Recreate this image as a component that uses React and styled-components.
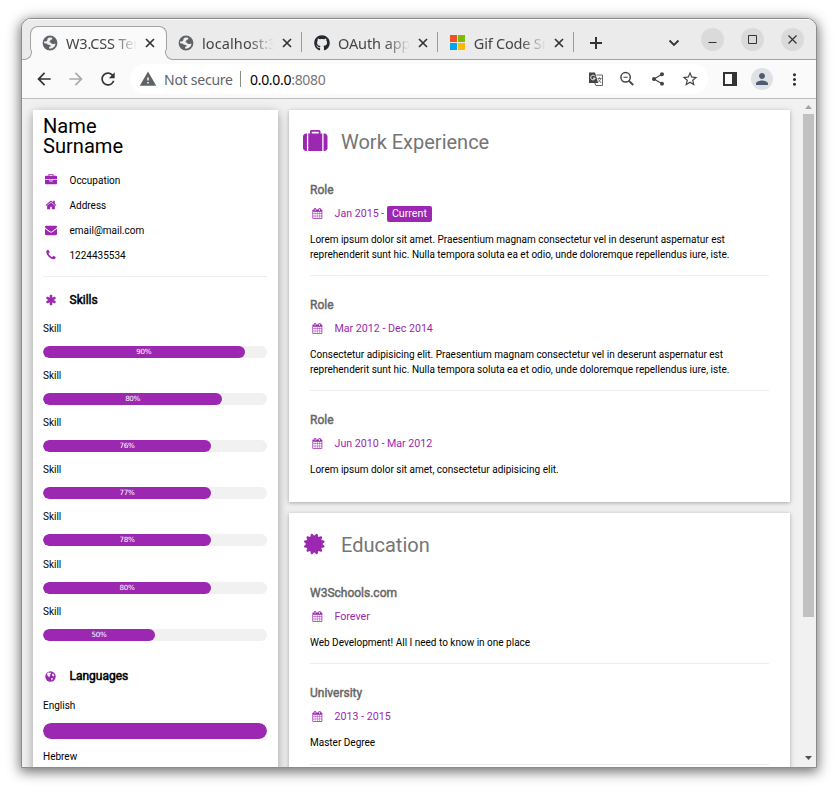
import React from "react";
import styled, { createGlobalStyle, css } from "styled-components";
import {
  MdArrowBack, MdArrowForward, MdRefresh, MdWarning,
  MdShare, MdStarBorder, MdPerson, MdMoreVert,
} from "react-icons/md";
import { FaGithub } from "react-icons/fa";

const PURPLE = "#9c27b0";

const GlobalStyle = createGlobalStyle`
  * { box-sizing: border-box; }
  body { margin: 0; background: #fff; overflow: hidden; }
  h1, h2, h3, h4, p { margin: 0; font-weight: 400; }
  svg { display: block; flex: none; }
`;

/* ---------- Window and tab strip ---------- */

const Desktop = styled.div`
  width: 838px;
  height: 792px;
  padding: 18px 21px;
  overflow: hidden;
`;

const BrowserWindow = styled.div`
  width: 796px;
  height: 750px;
  display: flex;
  flex-direction: column;
  border: 1px solid #8c8c8c;
  border-radius: 10px 10px 0 0;
  overflow: hidden;
  background: #fafafa;
  box-shadow: 0 3px 12px 1px rgba(0, 0, 0, 0.5), 0 2px 20px rgba(0, 0, 0, 0.1);
  font-family: "Noto Sans", "Open Sans", sans-serif;
`;

const TabStrip = styled.div`
  height: 41px;
  flex: none;
  display: flex;
  align-items: flex-end;
  padding-left: 8px;
  background: #ebebeb;
  border-bottom: 1px solid #a3a3a3;
  box-shadow: inset 0 1px #fafafa;
`;

const Tab = styled.div`
  position: relative;
  width: 136px;
  height: 33px;
  flex: none;
  display: flex;
  align-items: center;
  padding: 0 9px 0 12px;
  ${(p) => p.$separated && css`
    background: linear-gradient(#999, #999) right 0 top 6px / 1px 20px no-repeat;
  `}
  ${(p) => p.$active && css`
    width: 137px;
    margin-right: -1px;
    height: 34px;
    margin-bottom: -1px;
    padding: 0 10px 1px 11px;
    background: #fafafa;
    border: 1px solid #a3a3a3;
    border-bottom: 0;
    border-radius: 8px 8px 0 0;
    &::before, &::after {
      content: "";
      position: absolute;
      bottom: 0;
      width: 9px;
      height: 9px;
      border-bottom: 1px solid #a3a3a3;
      background: #ebebeb;
      clip-path: inset(0);
    }
    &::before {
      left: -9px;
      border-right: 1px solid #a3a3a3;
      border-bottom-right-radius: 8px;
      box-shadow: 3px 3px 0 #fafafa;
    }
    &::after {
      right: -9px;
      border-left: 1px solid #a3a3a3;
      border-bottom-left-radius: 8px;
      box-shadow: -3px 3px 0 #fafafa;
    }
  `}
`;

const TabTitle = styled.span`
  width: 73px;
  margin: 0 7px 0 8px;
  overflow: hidden;
  white-space: nowrap;
  font-size: 14.5px;
  line-height: 20px;
  letter-spacing: ${(p) => p.$tracking};
  color: #444;
  mask-image: linear-gradient(90deg, #000 65%, transparent);
`;

const StripButton = styled.div`
  display: flex;
  align-items: center;
  height: 33px;
  margin-left: ${(p) => p.$gap}px;
  color: #333;
`;

const WindowButtons = styled.div`
  display: flex;
  gap: 17px;
  margin: 0 12px 8px 21px;
`;

const WindowButton = styled.div`
  width: 23px;
  height: 23px;
  border-radius: 50%;
  background: #dadada;
  display: flex;
  align-items: center;
  justify-content: center;
`;

const MicrosoftLogo = styled.div`
  width: 16px;
  height: 15px;
  display: grid;
  grid-template-columns: 7px 7px;
  grid-template-rows: 7px 7px;
  gap: 1px;
`;

const LogoTile = styled.i`
  background: ${(p) => p.$color};
`;

/* ---------- Toolbar ---------- */

const Toolbar = styled.div`
  height: 39px;
  flex: none;
  display: flex;
  align-items: center;
  padding: 0 12px 0 12px;
  border-bottom: 1px solid #bdbdbd;
  color: #333;
`;

const NavButtons = styled.div`
  display: flex;
  gap: 12px;
  width: 96px;
`;

const Dimmed = styled.span`
  color: #aaa;
`;

const AddressBar = styled.div`
  width: 578px;
  height: 30px;
  border-radius: 15px;
  background: #fff;
  display: flex;
  align-items: center;
  padding: 0 9px;
  font-size: 14px;
  color: #5f6368;
`;

const Security = styled.span`
  margin-left: 7px;
  width: 76px;
  white-space: nowrap;
  letter-spacing: -0.25px;
`;

const Divider = styled.i`
  width: 1px;
  height: 16px;
  background: #8a8a8a;
  margin-right: 9px;
`;

const Url = styled.span`
  flex: 1;
  color: #777;
  letter-spacing: -0.3px;
  b { font-weight: 400; color: #000; }
`;

const AddressActions = styled.div`
  display: flex;
  align-items: center;
  gap: 15px;
  color: #444;
`;

const ToolbarEnd = styled.div`
  flex: 1;
  display: flex;
  align-items: center;
  justify-content: space-between;
  padding-left: 15px;
`;

const Avatar = styled.div`
  width: 22px;
  height: 22px;
  margin-left: 2px;
  border-radius: 50%;
  background: #dee1e6;
  color: #4f5b70;
  display: flex;
  align-items: center;
  justify-content: center;
`;

/* ---------- Page ---------- */

const Viewport = styled.div`
  flex: 1;
  min-height: 0;
  display: flex;
  background: #f1f1f1;
  overflow: hidden;
  font-family: Roboto, sans-serif;
  font-size: 10px;
  line-height: 15px;
  color: #000;
`;

const Columns = styled.div`
  flex: 1;
  display: flex;
  align-items: flex-start;
  gap: 11px;
  padding: 11px 11px 0;
`;

const Sidebar = styled.aside`
  width: 245px;
  height: 720px;
  padding: 6px 11px 0 10px;
  background: #fff;
  box-shadow: 0 3px 7px rgba(0, 0, 0, 0.2), 0 3px 13px rgba(0, 0, 0, 0.19);
`;

const PersonName = styled.h1`
  width: 120px;
  height: 52px;
  font-size: 20.1px;
  line-height: 20px;
`;

const ContactRow = styled.p`
  height: 25px;
  display: flex;
  align-items: center;
`;

const IconSlot = styled.span`
  width: ${(p) => p.$width}px;
  display: flex;
  justify-content: ${(p) => (p.$end ? "flex-end" : "center")};
  margin-right: ${(p) => p.$gap}px;
  padding-bottom: ${(p) => p.$lift ?? 2}px;
  color: ${PURPLE};
`;

const Rule = styled.hr`
  height: 1px;
  margin: ${(p) => p.$margin};
  border: 0;
  background: #eee;
`;

const SidebarHeading = styled.h2`
  height: 18px;
  margin-top: ${(p) => p.$top}px;
  display: flex;
  align-items: center;
  font-size: 12px;
  -webkit-text-stroke: 0.5px #000;
`;

const Meter = styled.div`
  height: ${(p) => p.$height}px;
  padding-top: 2px;
`;

const Track = styled.div`
  height: ${(p) => p.$height}px;
  margin-top: 10px;
  border-radius: 11px;
  background: #f1f1f1;
  overflow: hidden;
`;

const Fill = styled.div`
  height: 100%;
  border-radius: 11px;
  background: ${PURPLE};
  color: #fff;
  font-family: "DejaVu Sans", sans-serif;
  font-size: 7.2px;
  line-height: 12px;
  letter-spacing: -0.35px;
  text-align: center;
`;

const Meters = styled.div`
  margin-top: ${(p) => p.$top}px;
`;

const Main = styled.main`
  width: 501px;
  display: flex;
  flex-direction: column;
  gap: 11px;
`;

const Card = styled.section`
  height: ${(p) => p.$height}px;
  background: #fff;
  padding: 16px 21px 0;
  box-shadow: 0 1px 3px rgba(0, 0, 0, 0.2), 0 1px 7px rgba(0, 0, 0, 0.14);
`;

const CardHeading = styled.h2`
  height: 32px;
  margin: 0 0 23px -11px;
  display: flex;
  align-items: center;
  font-size: 20px;
  color: #757575;
`;

const Entry = styled.article`
  height: ${(p) => p.$height}px;
`;

const EntryTitle = styled.h3`
  height: 18px;
  font-size: 12px;
  line-height: 18px;
  color: #666;
  -webkit-text-stroke: 0.45px #666;
`;

const EntryDate = styled.h4`
  height: 16px;
  margin: 7px 0 10px;
  display: flex;
  align-items: center;
  font-size: 10.67px;
  line-height: 16px;
  white-space: pre;
  color: ${PURPLE};
`;

const Current = styled.span`
  height: 16px;
  padding: 0 5px;
  border-radius: 2px;
  line-height: 15px;
  background: ${PURPLE};
  color: #fff;
`;

const EntryText = styled.p`
  white-space: pre-line;
`;

const Scrollbar = styled.div`
  width: 15px;
  display: flex;
  flex-direction: column;
  align-items: center;
  padding: 6px 0 7px;
`;

const Thumb = styled.div`
  width: 11px;
  height: 503px;
  margin: 5px 0 auto;
  background: #c1c1c1;
`;

/* ---------- Drawings ---------- */

const GLYPHS = {
  home: "M1472 992v480q0 26-19 45t-45 19h-384v-384h-256v384h-384q-26 0-45-19t-19-45v-480q0-1 .5-3t.5-3l575-474 575 474q1 2 1 6zm223-69l-62 74q-8 9-21 11h-3q-13 0-21-7l-692-577-692 577q-12 8-24 7-13-2-21-11l-62-74q-8-10-7-23.5t11-21.5l719-599q32-26 76-26t76 26l244 204v-195q0-14 9-23t23-9h192q14 0 23 9t9 23v408l219 182q10 8 11 21.5t-7 23.5z",
  phone: "M1600 1240q0 27-10 70.5t-21 68.5q-21 50-122 106-94 51-186 51-27 0-53-3.5t-57.5-12.5-47-14.5-55.5-20.5-49-18q-98-35-175-83-127-79-264-216t-216-264q-48-77-83-175-3-9-18-49t-20.5-55.5-14.5-47-12.5-57.5-3.5-53q0-92 51-186 56-101 106-122 25-11 68.5-21t70.5-10q14 0 21 3 18 6 53 76 11 19 30 54t35 63.5 31 53.5q3 4 17.5 25t21.5 35.5 7 28.5q0 20-28.5 50t-62 55-62 53-28.5 46q0 9 5 22.5t8.5 20.5 14 24 11.5 19q76 137 174 235t235 174q2 1 19 11.5t24 14 20.5 8.5 22.5 5q18 0 46-28.5t53-62 55-62 50-28.5q14 0 28.5 7t35.5 21.5 25 17.5q25 15 53.5 31t63.5 35 54 30q70 35 76 53 3 7 3 21z",
  envelope: "M1792 710v794q0 66-47 113t-113 47h-1472q-66 0-113-47t-47-113v-794q44 49 101 87 362 246 497 345 57 42 92.5 65.5t94.5 48 110 24.5h2q51 0 110-24.5t94.5-48 92.5-65.5q170-123 498-345 57-39 100-87zm0-294q0 79-49 151t-122 123q-376 261-468 325-10 7-42.5 31t-54 38.5-52 32.5-57.5 27-50 9h-2q-23 0-50-9t-57.5-27-52-32.5-54-38.5-42.5-31q-91-64-262-182.5t-205-142.5q-62-42-117-115.5t-55-136.5q0-78 41.5-130t118.5-52h1472q65 0 112.5 47t47.5 113z",
  briefcase: "M640 256h512v-128h-512v128zm1152 640v480q0 66-47 113t-113 47h-1472q-66 0-113-47t-47-113v-480h672v160q0 26 19 45t45 19h320q26 0 45-19t19-45v-160h672zm-768 0v128h-256v-128h256zm768-480v384h-1792v-384q0-66 47-113t113-47h352v-160q0-40 28-68t68-28h576q40 0 68 28t28 68v160h352q66 0 113 47t47 113z",
  suitcase: "M640 256h512v-128h-512v128zM288 256v1280h-64q-92 0-158-66t-66-158v-832q0-92 66-158t158-66h64zM1408 256v1280h-1024v-1280h128v-160q0-40 28-68t68-28h576q40 0 68 28t28 68v160h128zM1792 480v832q0 92-66 158t-158 66h-64v-1280h64q92 0 158 66t66 158z",
  asterisk: "M1546 1050q46 26 59.5 77.5t-12.5 97.5l-64 110q-26 46-77.5 59.5t-97.5-12.5l-266-153v307q0 52-38 90t-90 38h-128q-52 0-90-38t-38-90v-307l-266 153q-46 26-97.5 12.5t-77.5-59.5l-64-110q-26-46-12.5-97.5t59.5-77.5l266-154-266-154q-46-26-59.5-77.5t12.5-97.5l64-110q26-46 77.5-59.5t97.5 12.5l266 153v-307q0-52 38-90t90-38h128q52 0 90 38t38 90v307l266-153q46-26 97.5-12.5t77.5 59.5l64 110q26 46 12.5 97.5t-59.5 77.5l-266 154z",
  calendar: "M192 1664h288v-288h-288v288zm352 0h320v-288h-320v288zm-352-352h288v-320h-288v320zm352 0h320v-320h-320v320zm-352-384h288v-288h-288v288zm736 736h320v-288h-320v288zm-384-736h320v-288h-320v288zm768 736h288v-288h-288v288zm-384-352h320v-320h-320v320zm-352-864v-288q0-13-9.5-22.5t-22.5-9.5h-64q-13 0-22.5 9.5t-9.5 22.5v288q0 13 9.5 22.5t22.5 9.5h64q13 0 22.5-9.5t9.5-22.5zm736 864h288v-320h-288v320zm-384-384h320v-288h-320v288zm384 0h288v-288h-288v288zm32-480v-288q0-13-9.5-22.5t-22.5-9.5h-64q-13 0-22.5 9.5t-9.5 22.5v288q0 13 9.5 22.5t22.5 9.5h64q13 0 22.5-9.5t9.5-22.5zm384-64v1280q0 52-38 90t-90 38h-1408q-52 0-90-38t-38-90v-1280q0-52 38-90t90-38h128v-96q0-66 47-113t113-47h64q66 0 113 47t47 113v96h384v-96q0-66 47-113t113-47h64q66 0 113 47t47 113v96h128q52 0 90 38t38 90z",
  certificate: "M1376 896l138 135q30 28 20 70-12 41-52 51l-188 48 53 186q12 41-19 70-29 31-70 19l-186-53-48 188q-10 40-51 52-12 2-19 2-31 0-51-22l-135-138-135 138q-28 30-70 20-41-11-51-52l-48-188-186 53q-41 12-70-19-31-29-19-70l53-186-188-48q-40-10-52-51-10-42 20-70l138-135-138-135q-30-28-20-70 12-41 52-51l188-48-53-186q-12-41 19-70 29-31 70-19l186 53 48-188q10-41 51-51 41-12 70 19l135 139 135-139q29-30 70-19 41 10 51 51l48 188 186-53q41-12 70 19 31 29 19 70l-53 186 188 48q40 10 52 51 10 42-20 70z",
};

function Glyph({ name, size = 12 }) {
  return (
    <svg width={size} height={size} viewBox="0 0 1792 1792" fill="currentColor" overflow="visible">
      <path d={GLYPHS[name]} fillRule={name === "suitcase" ? "evenodd" : undefined} />
    </svg>
  );
}

function GlobeFavicon() {
  return (
    <svg width="16" height="16" viewBox="0 0 16 16">
      <circle cx="8" cy="8" r="7.4" fill="#5f6368" />
      <path d="M7.2 2.6 10.4 2.8 10 4.4 8.2 5 8.4 6.2 6.8 7 8.6 7.4 10 8.9 13.6 8.7 12.6 11.4 10.2 13.2 7.4 13.8 7 12 8.6 11.2 8.2 10 6 9.8 4.6 8.4 2 8.2 2.4 6.2 4 6.6 5.2 5.4 5.6 3.6Z" fill="#f1f1f1" />
    </svg>
  );
}

function GlobeGlyph() {
  return (
    <svg width="11" height="11" viewBox="0 0 11 11">
      <circle cx="5.5" cy="5.5" r="5.2" fill={PURPLE} />
      <path d="M2.2 2.2 3.6 1.3 4.6 2 6.2 1.4 5.8 2.9 4.9 3.6 5.2 4.4 4.3 5.2 4.8 6.2 3.9 6 2.4 4.4ZM7.2 3 8.4 2.6 8.6 3.6 9.5 4.2 8.6 5.4 7.6 4.8 6.9 4.3ZM6.4 7 8 7.3 7.4 8.8 6.2 9.6Z" fill="#fff" />
    </svg>
  );
}

function TranslateIcon() {
  return (
    <svg width="16" height="16" viewBox="0 0 16 16">
      <path d="M8.5 4H14.5V14.5H8L6.8 12" fill="none" stroke="#666" />
      <path d="M1 1.5H7L10.2 12H1Z" fill="#444" />
      <path d="M7 5.4A2.3 2.3 0 1 0 7.2 7.2H5" fill="none" stroke="#fff" />
      <path d="M9.6 7.5H13.6M11.5 6.4V7.5M12.8 7.5Q12.2 9.8 10.2 11.2M10.4 8.4 13.2 12" fill="none" stroke="#666" strokeWidth=".9" />
    </svg>
  );
}

function ZoomOutIcon() {
  return (
    <svg width="16" height="16" viewBox="0 0 16 16" fill="none" stroke="#444">
      <circle cx="6.6" cy="6.3" r="4.7" strokeWidth="1.5" />
      <path d="M4.5 6.3H8.7" strokeWidth="1.1" />
      <path d="M10 9.8 14.2 14" strokeWidth="1.8" />
    </svg>
  );
}

function SidePanelIcon() {
  return (
    <svg width="14" height="14" viewBox="0 0 14 14">
      <path d="M0 0h14v14H0zM2 2v10h7V2z" fill="#333" fillRule="evenodd" />
    </svg>
  );
}

function Stroke({ d, size, width = 1.2, color = "#333" }) {
  return (
    <svg width={size} height={size} viewBox={`0 0 ${size} ${size}`}>
      <path d={d} fill="none" stroke={color} strokeWidth={width} />
    </svg>
  );
}

function Arrow({ up }) {
  return (
    <svg width="7" height="4" viewBox="0 0 7 4">
      <path d={up ? "M0 4 3.5 0 7 4Z" : "M0 0 3.5 4 7 0Z"} fill={up ? "#a3a3a3" : "#505050"} />
    </svg>
  );
}

/* ---------- Content ---------- */

const TABS = [
  { title: "W3.CSS Template", icon: <GlobeFavicon />, active: true, tracking: "-0.2px" },
  { title: "localhost:3000", icon: <GlobeFavicon />, separated: true, tracking: "0.1px" },
  { title: "OAuth application", icon: <FaGithub size={16} color="#24292f" />, separated: true, tracking: "-0.1px" },
  {
    title: "Gif Code Snippets",
    icon: (
      <MicrosoftLogo>
        {["#f25022", "#7fba00", "#00a4ef", "#ffb900"].map((c) => <LogoTile key={c} $color={c} />)}
      </MicrosoftLogo>
    ),
    separated: true,
    tracking: "-0.2px",
  },
];

const CONTACTS = [
  ["briefcase", "Occupation"],
  ["home", "Address"],
  ["envelope", "email@mail.com"],
  ["phone", "1224435534"],
];

const SKILLS = [[90, "90%"], [80, "80%"], [75, "76%"], [75, "77%"], [75, "78%"], [75, "80%"], [50, "50%"]];

const LOREM = "reprehenderit sunt hic. Nulla tempora soluta ea et odio, unde doloremque repellendus iure, iste.";

const WORK = [
  { title: "Role", date: "Jan 2015 - ", current: true, text: `Lorem ipsum dolor sit amet. Praesentium magnam consectetur vel in deserunt aspernatur est\n${LOREM}`, height: 94 },
  { title: "Role", date: "Mar 2012 - Dec 2014", text: `Consectetur adipisicing elit. Praesentium magnam consectetur vel in deserunt aspernatur est\n${LOREM}`, height: 94 },
  { title: "Role", date: "Jun 2010 - Mar 2012", text: "Lorem ipsum dolor sit amet, consectetur adipisicing elit.", height: 94, last: true },
];

const EDUCATION = [
  { title: "W3Schools.com", date: "Forever", text: "Web Development! All I need to know in one place", height: 79 },
  { title: "University", date: "2013 - 2015", text: "Master Degree", height: 80 },
];

function Section({ icon, title, entries, height }) {
  return (
    <Card $height={height}>
      <CardHeading>
        <IconSlot $width={icon === "suitcase" ? 28.5 : 29} $gap={icon === "suitcase" ? 13.5 : 13} $end $lift={icon === "suitcase" ? 0 : 2}>
          <Glyph name={icon} size={icon === "suitcase" ? 24.5 : 24} />
        </IconSlot>
        {title}
      </CardHeading>
      {entries.map((e, i) => (
        <React.Fragment key={i}>
          <Entry $height={e.height}>
            <EntryTitle>{e.title}</EntryTitle>
            <EntryDate>
              <IconSlot $width={14} $gap={10.5} $lift={1}><Glyph name="calendar" size={10.7} /></IconSlot>
              {e.date}
              {e.current && <Current>Current</Current>}
            </EntryDate>
            <EntryText>{e.text}</EntryText>
          </Entry>
          {!e.last && <Rule $margin="0 0 20px" />}
        </React.Fragment>
      ))}
    </Card>
  );
}

export default function App() {
  return (
    <>
      <GlobalStyle />
      <Desktop>
        <BrowserWindow>
          <TabStrip>
            {TABS.map((t) => (
              <Tab key={t.title} $active={t.active} $separated={t.separated}>
                {t.icon}
                <TabTitle $tracking={t.tracking}>{t.title}</TabTitle>
                <Stroke size={12} width={1.7} d="M2 2 10 10M10 2 2 10" />
              </Tab>
            ))}
            <StripButton $gap={15}><Stroke size={14} width={2} d="M7 1V13M1 7H13" /></StripButton>
            <StripButton $gap={65}><Stroke size={12} width={1.8} d="M1.5 3.5 6 8 10.5 3.5" /></StripButton>
            <WindowButtons>
              <WindowButton><Stroke size={9} d="M.5 7.5h8" width={1} /></WindowButton>
              <WindowButton><Stroke size={9} d="M.5.5h8v8h-8z" width={1} /></WindowButton>
              <WindowButton><Stroke size={9} d="M.5.5l8 8M8.5.5l-8 8" /></WindowButton>
            </WindowButtons>
          </TabStrip>

          <Toolbar>
            <NavButtons>
              <MdArrowBack size={20} />
              <Dimmed><MdArrowForward size={20} /></Dimmed>
              <MdRefresh size={20} />
            </NavButtons>
            <AddressBar>
              <MdWarning size={18} />
              <Security>Not secure</Security>
              <Divider />
              <Url><b>0.0.0.0</b>:8080</Url>
              <AddressActions>
                <TranslateIcon />
                <ZoomOutIcon />
                <MdShare size={16} />
                <MdStarBorder size={18} />
              </AddressActions>
            </AddressBar>
            <ToolbarEnd>
              <SidePanelIcon />
              <Avatar><MdPerson size={18} /></Avatar>
              <MdMoreVert size={19} />
            </ToolbarEnd>
          </Toolbar>

          <Viewport>
            <Columns>
              <Sidebar>
                <PersonName>Name Surname</PersonName>
                {CONTACTS.map(([icon, label]) => (
                  <ContactRow key={icon}>
                    <IconSlot $width={15} $gap={11.5}><Glyph name={icon} /></IconSlot>
                    {label}
                  </ContactRow>
                ))}
                <Rule $margin="8px 0 0" />
                <SidebarHeading $top={14}>
                  <IconSlot $width={15} $gap={11.5} $lift={0}><Glyph name="asterisk" /></IconSlot>
                  Skills
                </SidebarHeading>
                <Meters $top={10}>
                  {SKILLS.map(([width, label], i) => (
                    <Meter key={i} $height={47.12}>
                      Skill
                      <Track $height={12}><Fill style={{ width: `${width}%` }}>{label}</Fill></Track>
                    </Meter>
                  ))}
                </Meters>
                <SidebarHeading $top={19}>
                  <IconSlot $width={15} $gap={11.5} $lift={0}><GlobeGlyph /></IconSlot>
                  Languages
                </SidebarHeading>
                <Meters $top={10}>
                  <Meter $height={51}>
                    English
                    <Track $height={16}><Fill style={{ width: "100%" }} /></Track>
                  </Meter>
                  <Meter $height={51}>Hebrew</Meter>
                </Meters>
              </Sidebar>
              <Main>
                <Section icon="suitcase" title="Work Experience" entries={WORK} height={392} />
                <Section icon="certificate" title="Education" entries={EDUCATION} height={300} />
              </Main>
            </Columns>
            <Scrollbar>
              <Arrow up />
              <Thumb />
              <Arrow />
            </Scrollbar>
          </Viewport>
        </BrowserWindow>
      </Desktop>
    </>
  );
}
